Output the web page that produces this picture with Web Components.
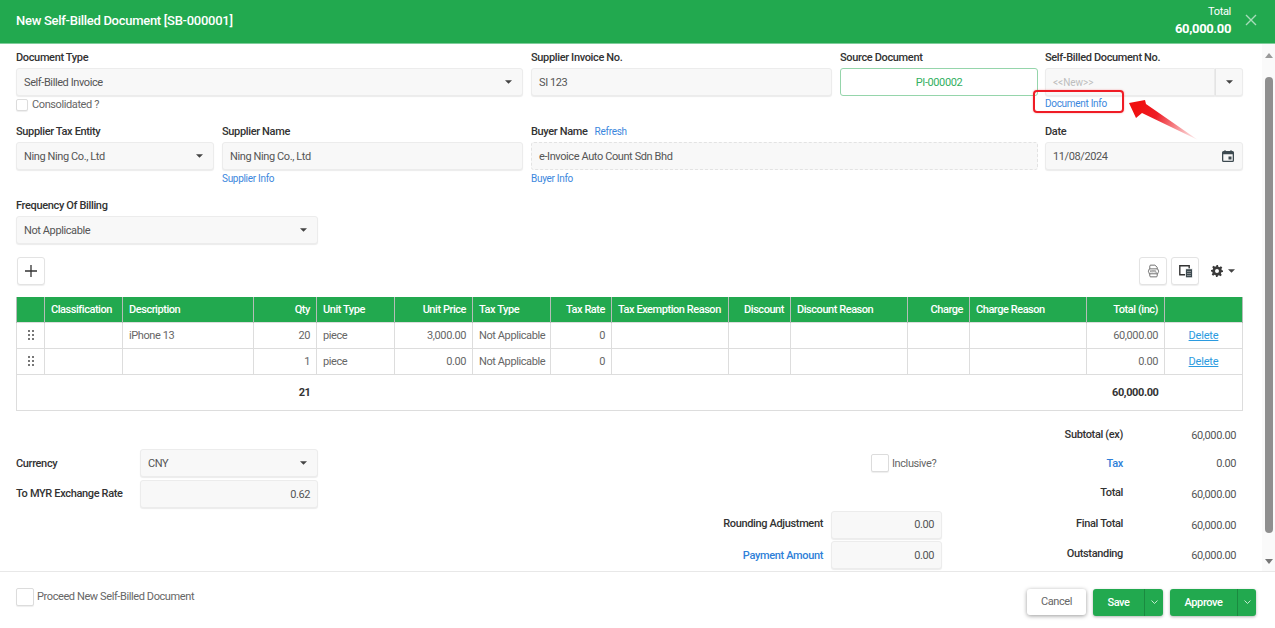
<!DOCTYPE html>
<html lang="en">
<head>
<meta charset="utf-8">
<title>New Self-Billed Document</title>
<style>
html,body{margin:0;padding:0;height:100%;overflow:hidden;background:#fff;font-family:Roboto,"Liberation Sans",sans-serif;font-size:11px;color:#555}
</style>
</head>
<body>
<sb-app></sb-app>
<script>
const caret='<svg width="7" height="4" viewBox="0 0 8 4" style="display:block"><path d="M0 0h8L4 4z" fill="#444"/></svg>';
function def(name,css,html){
  customElements.define(name,class extends HTMLElement{
    constructor(){super();const r=this.attachShadow({mode:'open'});r.innerHTML='<style>'+css+'</style>'+(typeof html==='function'?html(this):html);}
  });
}
/* header */
def('sb-header',`:host{display:flex;align-items:center;height:44px;box-sizing:border-box;background:#22a94f;border-bottom:1px solid #7fcd9b;color:#fff;padding:0 19px 3px 16px;flex:none;font-family:Roboto,sans-serif}
.t{font-size:13px;font-weight:500;flex:1;letter-spacing:-.28px}
.r{text-align:right;line-height:17px}
.a{font-size:11px;letter-spacing:-.3px}.b{font-size:13px;font-weight:700;letter-spacing:-.35px}
.x{margin-left:14px;width:12px;height:12px;display:block;margin-right:-1px}`,
`<div class="t"><slot></slot></div><div class="r"><div class="a">Total</div><div class="b">60,000.00</div></div>
<svg class="x" viewBox="0 0 12 12"><path d="M1 1l10 10M11 1L1 11" stroke="#a8dcba" stroke-width="1.4" fill="none"/></svg>`);
/* field */
def('sb-field',`:host{display:block;min-width:0}
.l{height:14px;line-height:14px;font-size:11px;letter-spacing:-.35px;font-weight:500;color:#333;margin-bottom:3px;white-space:nowrap}
.f{color:#3b87dd;font-weight:400;font-size:10px;letter-spacing:-.3px;margin-left:7px}
.h{height:18px;line-height:14px;font-size:10px;letter-spacing:-.3px;color:#3b87dd;white-space:nowrap;box-sizing:border-box;padding-top:var(--hp,2px)}`,
h=>`<div class="l">${h.getAttribute('label')||''}${h.getAttribute('refresh')!==null?'<span class="f">Refresh</span>':''}</div><slot></slot><div class="h"><slot name="help"></slot></div>`);
/* input */
def('sb-input',`:host{display:flex;align-items:center;height:28px;box-sizing:border-box;background:#f8f8f8;border:1px solid #ececec;border-radius:3px;box-shadow:0 1px 1px #ececec;padding:0 7px;font-size:11px;color:#555;min-width:0;white-space:nowrap}
:host([dashed]){border:1px dashed #e3e3e3;box-shadow:none}
:host([green]){background:#fff;border:1px solid #95d5ab;color:#33b061;box-shadow:none;text-align:center}
:host([muted]){color:#bdbdbd;font-size:10px;letter-spacing:0}
.c{flex:1}.e{display:flex;align-items:center}`,
h=>`<span class="c"${h.hasAttribute('right')?' style="text-align:right"':''}><slot></slot></span><span class="e"><slot name="end"></slot></span>`);
/* select */
def('sb-select',`:host{display:flex;align-items:center;height:28px;box-sizing:border-box;background:#f8f8f8;border:1px solid #ececec;border-radius:3px;box-shadow:0 1px 1px #ececec;padding:0 10px 0 7px;font-size:11px;color:#555}
.c{flex:1}`,`<span class="c"><slot></slot></span>${caret}`);
/* check */
def('sb-check',`:host{display:inline-flex;align-items:center;color:#666;font-size:11px;white-space:nowrap}
i{display:block;flex:none;box-sizing:border-box;width:var(--s,18px);height:var(--s,18px);background:#fff;border:1px solid #dcdcdc;border-radius:2px;box-shadow:0 1px 1px #eee;margin-right:var(--g,4px)}`,`<i></i><slot></slot>`);
/* icon button */
def('sb-iconbtn',`:host{display:flex;align-items:center;justify-content:center;width:28px;height:28px;box-sizing:border-box;background:#fff;border:1px solid #e3e3e3;border-radius:3px;box-shadow:0 1px 1px #eee}`,`<slot></slot>`);
/* buttons */
def('sb-button',`:host{display:flex;height:27px;border-radius:3px;background:#22a94f;color:#fff;font-weight:500;font-size:11px;box-shadow:0 1px 3px rgba(0,0,0,.3);overflow:hidden}
.m{display:flex;align-items:center;justify-content:center;width:var(--w,51px)}
.d{display:flex;align-items:center;justify-content:center;width:19px;box-sizing:border-box;border-left:1px solid #1b8a40}`,
`<div class="m"><slot></slot></div><div class="d"><svg width="7" height="4" viewBox="0 0 7 4"><path d="M.5.5l3 3 3-3" fill="none" stroke="#d6f0de" stroke-width=".9"/></svg></div>`);
def('sb-cancel',`:host{display:flex;align-items:center;justify-content:center;width:59px;height:26px;background:#fff;border:0;border-radius:3px;color:#666;font-size:11px;box-shadow:0 1px 4px rgba(0,0,0,.4)}`,`<slot></slot>`);
/* table */
def('sb-table',`:host{display:block;font-size:11px;color:#666}
table{border-collapse:collapse;table-layout:fixed;width:1227px;border:1px solid #ddd}
th{height:25px;padding:0 6px 1px;box-sizing:border-box;background:#22a94f;color:#fff;font-weight:500;letter-spacing:-.45px;text-align:left;border:1px solid #b5bdb8;border-top:0;border-bottom:0;white-space:nowrap;overflow:hidden}
thead tr{border:1px solid #22a94f}
td{height:26px;padding:0 6px 1px;box-sizing:border-box;border:1px solid #ddd;white-space:nowrap}
.n{text-align:right}
a{color:#2b9be0;text-decoration:underline;display:block;text-align:center;letter-spacing:-.2px}
tfoot td{height:36px;font-weight:700;color:#333;border-left:0;border-right:0}
.g{display:grid;grid-template-columns:2px 2px;gap:2px;justify-content:center}
.g b{width:2px;height:2px;background:#777;display:block}`,
()=>{
 const w=[28,78,131,63,78,78,78,61,117,62,117,62,117,78,78];
 const row=(d,q,p,dd)=>`<tr><td><div class="g"><b></b><b></b><b></b><b></b><b></b><b></b></div></td><td></td><td>${d}</td><td class="n">${q}</td><td>piece</td><td class="n">${p}</td><td>Not Applicable</td><td class="n">0</td><td></td><td></td><td></td><td></td><td></td><td class="n">${dd}</td><td><a>Delete</a></td></tr>`;
 return `<table><colgroup>${w.map(x=>`<col style="width:${x}px">`).join('')}</colgroup>
 <thead><tr><th></th><th>Classification</th><th>Description</th><th class="n">Qty</th><th>Unit Type</th><th class="n">Unit Price</th><th>Tax Type</th><th class="n">Tax Rate</th><th>Tax Exemption Reason</th><th class="n">Discount</th><th>Discount Reason</th><th class="n">Charge</th><th>Charge Reason</th><th class="n">Total (inc)</th><th></th></tr></thead>
 <tbody>${row('iPhone 13','20','3,000.00','60,000.00')}${row('','1','0.00','0.00')}</tbody>
 <tfoot><tr><td colspan="4" class="n">21</td><td colspan="9"></td><td class="n">60,000.00</td><td></td></tr></tfoot></table>`;
});
/* scrollbar */
def('sb-scrollbar',`:host{display:flex;flex-direction:column;align-items:center;width:13px;flex:none;background:#fafafa}
.u,.d{width:0;height:0;border-left:4px solid transparent;border-right:4px solid transparent}
.u{border-bottom:5px solid #9a9a9a;margin-top:9px}
.d{border-top:5px solid #777;margin-top:auto;margin-bottom:7px}
.t{width:8px;height:456px;background:#8f8f8f;border-radius:4px;margin-top:19px;margin-left:1px}`,`<div class="u"></div><div class="t"></div><div class="d"></div>`);
/* callout */
def('sb-callout',`:host{position:absolute;left:1030px;top:86px;width:175px;height:60px;pointer-events:none}
.b{position:absolute;left:3px;top:4px;width:91px;height:23px;box-sizing:border-box;border:2px solid #ef1c25;border-radius:4px;box-shadow:0 0 2px rgba(239,28,37,.4)}
svg{position:absolute;left:0;top:0}`,
`<div class="b"></div><svg width="175" height="60" viewBox="0 0 175 60"><defs><linearGradient id="g" x1="108" y1="20" x2="168" y2="54" gradientUnits="userSpaceOnUse"><stop offset="0" stop-color="#f01010"/><stop offset=".3" stop-color="#ee1c25"/><stop offset="1" stop-color="#ee3a40" stop-opacity=".05"/></linearGradient></defs><path d="M99 17L115 14L116 18L168 54L112 27L106 32Z" fill="url(#g)"/></svg>`);
/* bottom form */
def('sb-summary',`:host{display:grid;grid-template-columns:124px 178px 1fr 140px 111px 181px 113px 7px;grid-template-rows:22px 29px 28px 28px 28px;row-gap:2.5px;margin-top:13px;font-size:11px;color:#555;align-items:center}
.l{font-weight:500;color:#333;white-space:nowrap;padding-bottom:3px;letter-spacing:-.35px}
.r{text-align:right;white-space:nowrap}
.m{padding-right:8px}
.a{color:#2f7fd8}
.v{text-align:right;padding-top:1px}
.inc{grid-column:5;padding-left:40px;--s:18px;--g:3px}`,
`<div class="l r" style="grid-column:6;grid-row:1;padding-bottom:2px">Subtotal (ex)</div><div class="v" style="grid-column:7;grid-row:1">60,000.00</div>
<div class="l" style="grid-row:2;grid-column:1;padding:0">Currency</div><sb-select style="grid-row:2;grid-column:2">CNY</sb-select>
<sb-check class="inc" style="grid-row:2;">Inclusive?</sb-check>
<div class="l r a" style="grid-column:6;grid-row:2;padding:0">Tax</div><div class="v" style="grid-column:7;grid-row:2">0.00</div>
<div class="l" style="grid-row:3;grid-column:1;padding-bottom:1px">To MYR Exchange Rate</div><sb-input right style="grid-row:3;grid-column:2">0.62</sb-input>
<div class="l r" style="grid-column:6;grid-row:3;padding-bottom:4px">Total</div><div class="v" style="grid-column:7;grid-row:3;padding:0">60,000.00</div>
<div class="l r m" style="grid-row:4;grid-column:4">Rounding Adjustment</div><sb-input right style="grid-row:4;grid-column:5">0.00</sb-input>
<div class="l r" style="grid-column:6;grid-row:4">Final Total</div><div class="v" style="grid-column:7;grid-row:4">60,000.00</div>
<div class="l r m a" style="grid-row:5;grid-column:4;padding-bottom:0">Payment Amount</div><sb-input right style="grid-row:5;grid-column:5">0.00</sb-input>
<div class="l r" style="grid-column:6;grid-row:5">Outstanding</div><div class="v" style="grid-column:7;grid-row:5">60,000.00</div>`);
/* app */
def('sb-app',`:host{display:flex;flex-direction:column;height:628px;width:1275px;position:relative;font-family:Roboto,"Liberation Sans",sans-serif;font-size:11px;letter-spacing:-.4px;color:#555;background:#fff}
.mid{display:flex;height:527px;flex:none;overflow:hidden}
.form{flex:1;min-width:0;padding:7px 19px 0 16px;overflow:hidden}
.r1,.r2,.r3{display:grid;column-gap:8px}
.r1{grid-template-columns:507px 301px 198px 198px;height:74px;--hp:1px}
.r2{grid-template-columns:198px 301px 507px 198px;height:74px}
.r3{grid-template-columns:302px;height:58px}
.last{margin-left:-1px;margin-right:1px}
.no{display:flex}
.no sb-input{flex:1;border-radius:3px 0 0 3px}
.dd{width:28px;height:28px;box-sizing:border-box;background:#f8f8f8;border:1px solid #ececec;border-left-color:#e4e4e4;border-radius:0 3px 3px 0;box-shadow:0 1px 1px #ececec;display:flex;align-items:center;justify-content:center}
.cons{--s:12px;--g:4px;display:flex;height:14px;margin-top:1px}
.cons,.ft{letter-spacing:-.4px}
.tools{display:flex;align-items:center;height:28px;gap:4px;margin:0 0 12px 1px}
.sp{flex:1}
.gear{display:flex;align-items:center;gap:5px;margin-left:8px;width:32px}
.foot{flex:1;display:flex;align-items:center;border-top:1px solid #e8e8e8;padding:1px 19px 0 16px;gap:7px}
.ft{flex:1;padding-bottom:8px;--s:18px;--g:3px}
.btns{display:flex;gap:7px;padding-top:3px}
.save{--w:51px}.appr{--w:67px}
a{color:#3b87dd;text-decoration:none}`,
`<sb-header>New Self-Billed Document [SB-000001]</sb-header>
<div class="mid"><div class="form">
 <div class="r1">
  <sb-field label="Document Type"><sb-select>Self-Billed Invoice</sb-select><sb-check class="cons" slot="help">Consolidated ?</sb-check></sb-field>
  <sb-field label="Supplier Invoice No."><sb-input>SI 123</sb-input></sb-field>
  <sb-field label="Source Document"><sb-input green>PI-000002</sb-input></sb-field>
  <sb-field class="last" label="Self-Billed Document No."><div class="no"><sb-input muted>&lt;&lt;New&gt;&gt;</sb-input><div class="dd">${caret}</div></div><a slot="help">Document Info</a></sb-field>
 </div>
 <div class="r2">
  <sb-field label="Supplier Tax Entity"><sb-select>Ning Ning Co., Ltd</sb-select></sb-field>
  <sb-field label="Supplier Name"><sb-input>Ning Ning Co., Ltd</sb-input><a slot="help">Supplier Info</a></sb-field>
  <sb-field label="Buyer Name" refresh><sb-input dashed>e-Invoice Auto Count Sdn Bhd</sb-input><a slot="help">Buyer Info</a></sb-field>
  <sb-field class="last" label="Date"><sb-input>11/08/2024<svg slot="end" width="12" height="12" viewBox="0 0 12 12" style="display:block;margin-right:1px"><path fill-rule="evenodd" d="M2.500 0h1v1h5V0h1v1h1A1.500 1.500 0 0 1 12 2.500v8A1.500 1.500 0 0 1 10.500 12h-9A1.500 1.500 0 0 1 0 10.500v-8A1.500 1.500 0 0 1 1.500 1h1zM1.300 4.300v6.400h9.400V4.300zM6.500 6.500h3v3h-3z" fill="#3d4a50"/></svg></sb-input></sb-field>
 </div>
 <div class="r3"><sb-field label="Frequency Of Billing"><sb-select>Not Applicable</sb-select></sb-field></div>
 <div class="tools">
  <sb-iconbtn><svg width="14" height="14" viewBox="0 0 14 14"><path d="M7 1v12M1 7h12" stroke="#333" stroke-width="1.300" fill="none"/></svg></sb-iconbtn>
  <div class="sp"></div>
  <sb-iconbtn><svg width="13" height="14" viewBox="0 0 14 15" fill="none" stroke="#555" stroke-width=".9"><path d="M3 5V2.200q0-1 1-1h4.500L11 3.500V5M3 10.500v2.300q0 1 1 1h6q1 0 1-1v-2.300"/><path d="M2.500 5.200h9q.5 1.300 1 2.600-.5 1.400-1 2.700h-9q-.5-1.300-1-2.700.5-1.300 1-2.600z"/><path d="M3.500 6.700l1.500 2.300M5 6.700l-1.500 2.300M6.200 9V6.700l.8 1.100.8-1.100V9M9.300 6.700V9h1.300" stroke-width=".6"/></svg></sb-iconbtn>
  <sb-iconbtn><svg width="15" height="13" viewBox="0 0 15 13"><path d="M1.800.8h9.400v9H1.800z" fill="none" stroke="#333" stroke-width="1.400"/><rect x="7.500" y="3.800" width="7" height="9" fill="#3d4a50" stroke="#fff" stroke-width=".8"/><path d="M9 6.500h4M9 8.500h4M9 10.500h4" stroke="#bbb" stroke-width=".6"/></svg></sb-iconbtn>
  <div class="gear"><svg width="12" height="12" viewBox="0 0 24 24" style="flex:none"><path fill="#3a3a3a" fill-rule="evenodd" d="M14 0l.6 3.300 2.400 1 2.800-1.900 2.800 2.800-1.900 2.800 1 2.400L24 11v3l-3.300.6-1 2.400 1.900 2.800-2.800 2.800-2.800-1.900-2.400 1L13 24h-3l-.6-3.300-2.400-1-2.800 1.900-2.800-2.800 1.900-2.800-1-2.400L0 13v-3l3.300-.6 1-2.400L2.400 4.200l2.800-2.800L8 3.300l2.400-1L11 0zM12 8a4 4 0 1 0 0 8 4 4 0 0 0 0-8z"/></svg>${caret}</div>
 </div>
 <sb-table></sb-table>
 <sb-summary></sb-summary>
</div><sb-scrollbar></sb-scrollbar></div>
<div class="foot"><sb-check class="ft">Proceed New Self-Billed Document</sb-check>
 <div class="btns"><sb-cancel>Cancel</sb-cancel><sb-button class="save">Save</sb-button><sb-button class="appr">Approve</sb-button></div></div>
<sb-callout></sb-callout>`);
</script>
</body>
</html>
